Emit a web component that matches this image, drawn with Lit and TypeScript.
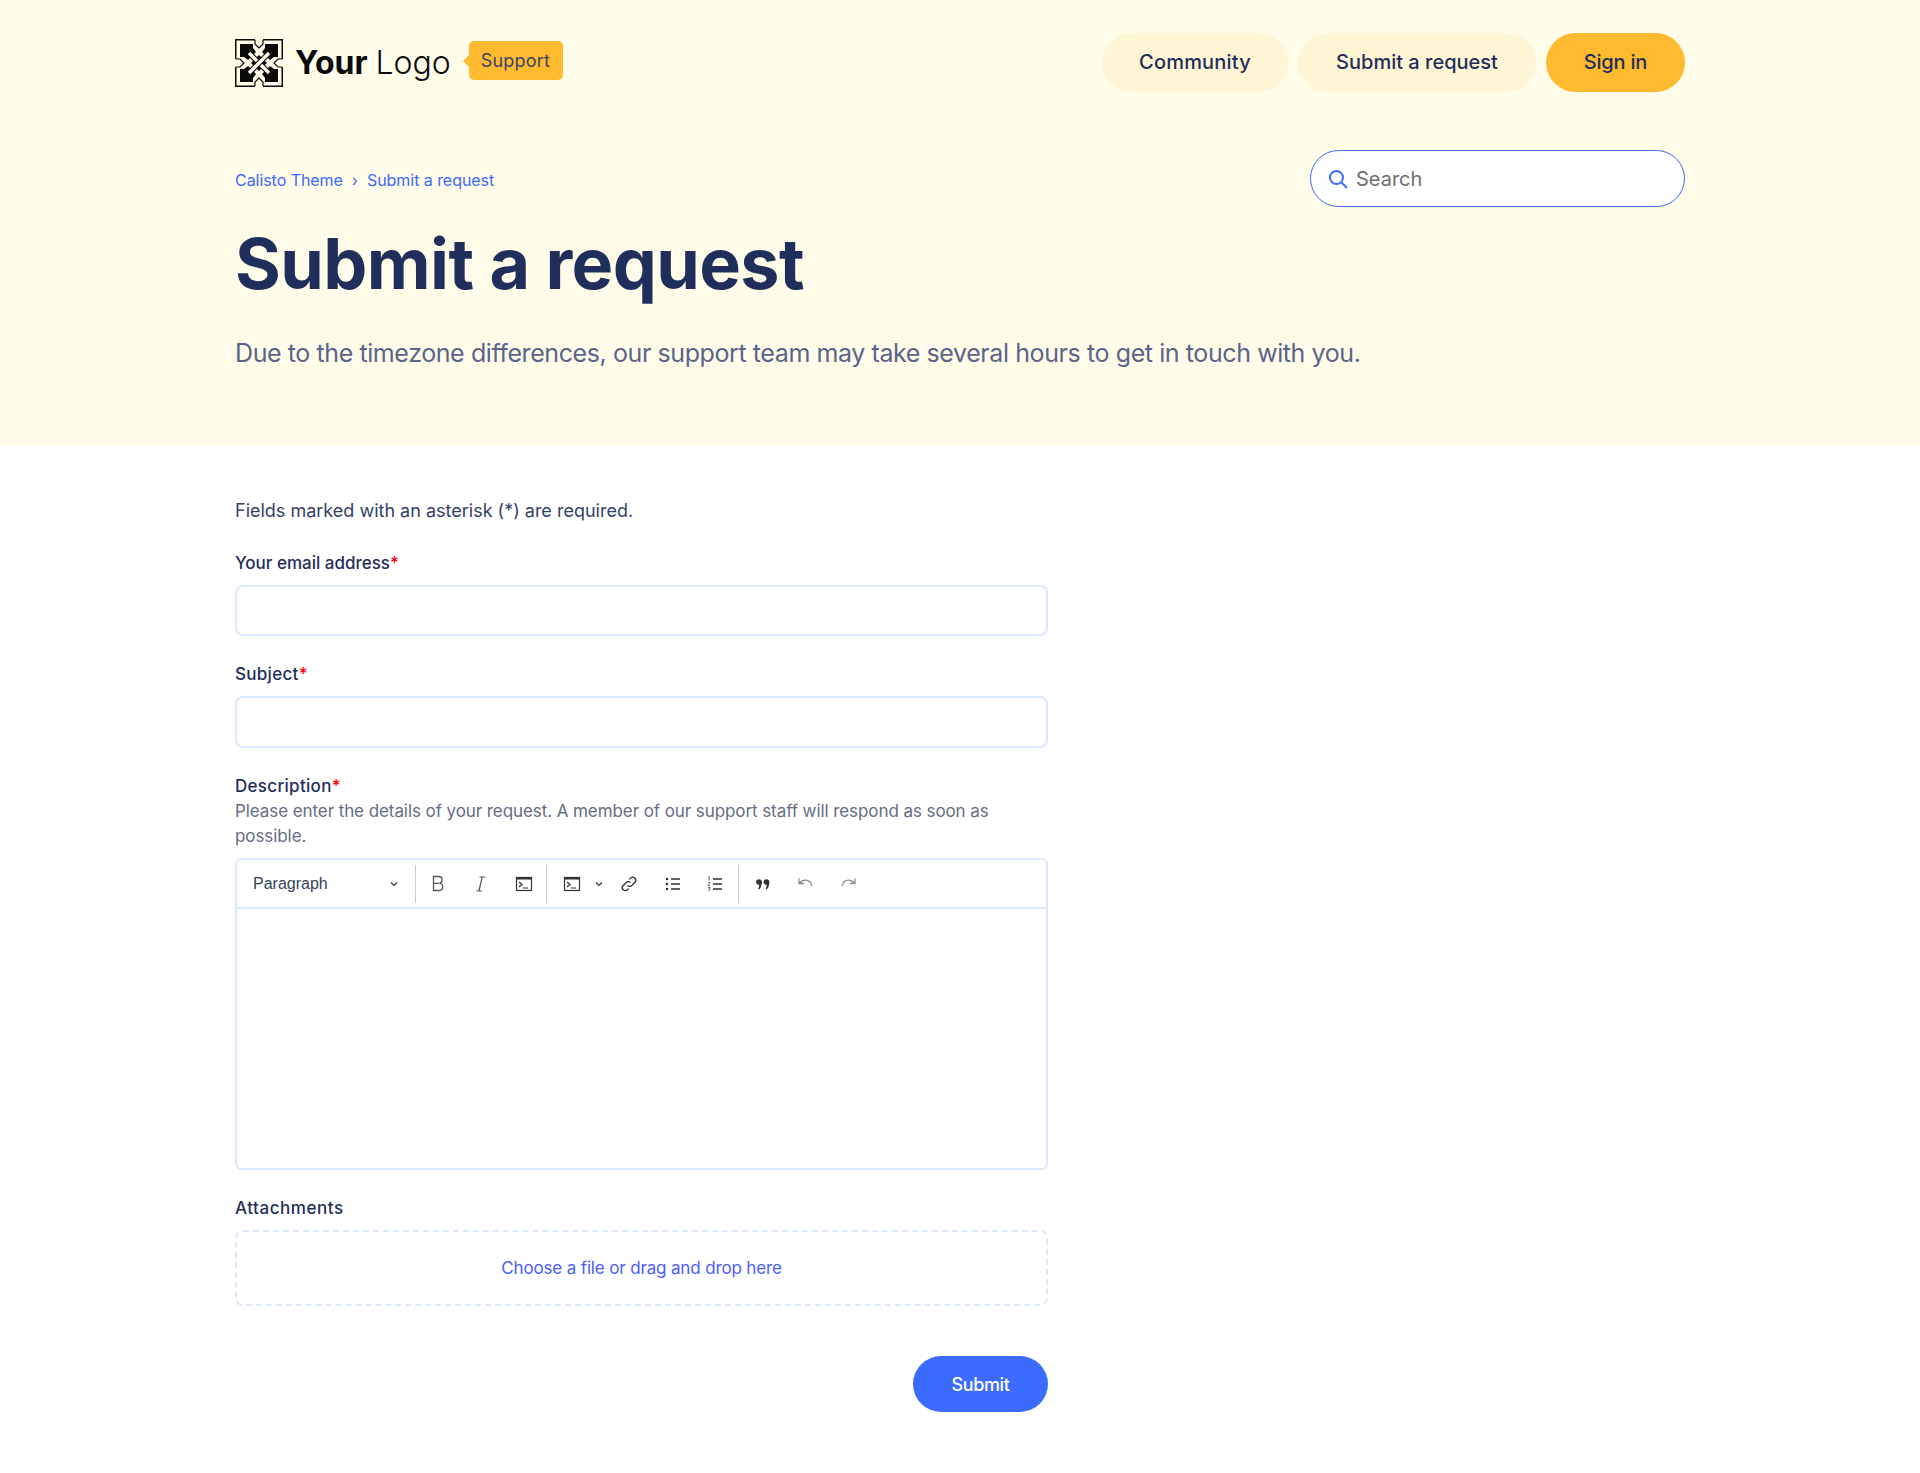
import { LitElement, html, css, svg } from "lit";
import { customElement } from "lit/decorators.js";

const ic = (w: number, body: any) => html`<svg width=${w} height=${w} viewBox="0 0 20 20" fill="none">${body}</svg>`;
const code = svg`<rect x="2.500" y="3.500" width="15" height="13" fill="none" stroke="#333" stroke-width="1.200"/><path d="M2.500 3.500h15v2h-15z" fill="#333"/><path d="M5 8l3 2.500-3 2.500M9 14h5" stroke="#333" stroke-width="1.200" fill="none"/>`;
const chevron = svg`<path d="M2 3.500l3 3 3-3" stroke="#333" stroke-width="1.200"/>`;

@customElement("app-root")
export class AppRoot extends LitElement {
  static styles = css`
    :host { display: block; font-family: Inter, "Noto Sans", sans-serif; color: #1f2e5a; background: #fff; height: 1473px; }
    a { text-decoration: none; }
    .hero { background: #fffcea; height: 446px; padding: 0 235px; box-sizing: border-box; }
    .top { display: flex; justify-content: space-between; align-items: center; padding-top: 33px; }
    .brand { display: flex; align-items: center; }
    .logo { display: block; }
    .logotext { font-size: 32px; color: #0b0b0b; margin-left: 12px; font-weight: 300; white-space: nowrap; word-spacing: -1px; }
    .logotext b { font-weight: 700; }
    .tag { position: relative; margin-left: 18px; background: #ffba2f; border-radius: 5px; height: 39px; padding: 0 13px 0 12px; display: flex; align-items: center; font-size: 18px; letter-spacing: 0.2px; color: #3a4468; margin-top: -5px; font-weight: 400; }
    .tag::before { content: ""; position: absolute; left: -6px; top: 14px; border: 6px solid transparent; border-left: 0; border-right-color: #ffba2f; }
    nav { display: flex; gap: 10px; }
    nav a { height: 59px; padding-bottom: 2px; box-sizing: border-box; border-radius: 30px; background: #fff6d6; display: flex; align-items: center; justify-content: center; font-size: 20px; font-weight: 500; color: #1f2e5a; letter-spacing: 0; }
    nav a.c { width: 186px; letter-spacing: 0.2px; } nav a.s { width: 238px; } nav a.i { width: 139px; background: #ffba2f; letter-spacing: -0.2px; }
    .crumbrow { display: flex; justify-content: space-between; align-items: center; margin-top: 58px; }
    .crumbs { font-size: 16px; color: #3d68ff; display: flex; gap: 9px; letter-spacing: -0.05px; padding-top: 2px; }
    .crumbs i { font-style: normal; }
    .search { width: 375px; height: 57px; box-sizing: border-box; border: 1px solid #3d6bff; border-radius: 29px; background: #fff; display: flex; align-items: center; padding-left: 16px; gap: 7px; font-size: 20px; color: #6f6f6f; }
    h1 { margin: 15px 0 0; font-size: 70px; line-height: 84px; font-weight: 700; color: #1f2e5a; letter-spacing: -0.6px; }
    .sub { margin: 30px 0 0; font-size: 25px; line-height: 34px; color: #5b6489; font-weight: 400; letter-spacing: -0.41px; }
    main { padding: 53px 235px 0; width: 813px; box-sizing: content-box; font-size: 18px; }
    .note { font-size: 18px; line-height: 24px; margin: 0; color: #343f66; letter-spacing: 0; }
    label { display: block; font-size: 17px; font-weight: 500; line-height: 24px; color: #1f2e5a; letter-spacing: 0; }
    label.l2 { letter-spacing: 0.3px; } label.l3 { letter-spacing: 0.3px; } label.l4 { letter-spacing: 0.55px; }
    label em { font-style: normal; color: #f00; }
    .f1 { margin-top: 28px; }
    .f { margin-top: 26px; }
    .input { height: 51px; box-sizing: border-box; border: 2px solid #dce8fd; border-radius: 8px; margin-top: 10px; }
    .input.tall { height: 52px; }
    .hint { font-size: 17px; line-height: 25px; color: #666d85; letter-spacing: -0.08px; padding-top: 1px; }
    .editor { margin-top: 9px; height: 312px; box-sizing: border-box; border: 2px solid #dce8fd; border-radius: 6px; }
    .bar { height: 47px; border-bottom: 2px solid #dce8fd; display: flex; align-items: center; box-sizing: content-box; color: #333; font-family: "Liberation Sans", Arial, sans-serif; }
    .para { font-size: 16px; width: 136px; margin-left: 16px; color: #34425a; }
    .sep { width: 1px; height: 38px; background: #ccced1; }
    .bar svg { flex: none; display: block; }
    .chev { margin-right: 16px; }
    .chev2 { margin-left: -3px; }
    .bi { width: 42px; display: flex; justify-content: center; align-items: center; }
    .w38 { width: 38px; } .w44 { width: 44px; } .w46 { width: 46px; } .w48 { width: 48px; } .w50 { width: 50px; }
    .dl { margin-top: 10px; height: 76px; box-sizing: border-box; border: 2px dashed #dce8fd; border-radius: 8px; display: flex; align-items: center; justify-content: center; font-size: 17px; color: #4b5dff; letter-spacing: -0.15px; }
    .actions { display: flex; justify-content: flex-end; margin-top: 50px; }
    .submit { width: 135px; height: 56px; border-radius: 28px; background: #3b6cff; color: #fff; display: flex; align-items: center; justify-content: center; font-size: 18px; font-weight: 500; letter-spacing: -0.4px; }
  `;

  render() {
    return html`
      <div class="hero">
        <div class="top">
          <div class="brand">
            <svg class="logo" width="48" height="48" viewBox="0 0 48 48">
              <rect x=".75" y=".75" width="46.500" height="46.500" fill="#fffcea" stroke="#0a0a0a" stroke-width="1.500"/>
              <g fill="#0a0a0a">
                <polygon points="5,5 18,5 18,9 21,13 13,21 9,18 5,18"/>
                <polygon points="43,5 30,5 30,9 27,13 35,21 39,18 43,18"/>
                <polygon points="5,43 18,43 18,39 21,35 13,27 9,30 5,30"/>
                <polygon points="43,43 30,43 30,39 27,35 35,27 39,30 43,30"/>
                <polygon points="24,16 32,24 24,32 16,24"/>
              </g>
              <g fill="none">
                <path d="M15 15L33 33" stroke="#0a0a0a" stroke-width="5.500"/>
                <path d="M14 14L34 34" stroke="#fffcea" stroke-width="3.400"/>
                <path d="M33 15L15 33" stroke="#0a0a0a" stroke-width="5.500"/>
                <path d="M34 14L14 34" stroke="#fffcea" stroke-width="3.400"/>
              </g>
              <path d="M20 0v5l4 4 4-4V0zM20 48v-5l4-4 4 4v5zM0 20h5l4 4-4 4H0zM48 20h-5l-4 4 4 4h5z" fill="#fffcea"/>
              <path d="M20 1v4l4 4 4-4V1M20 47v-4l4-4 4 4v4M1 20h4l4 4-4 4H1M47 20h-4l-4 4 4 4h4" fill="none" stroke="#0a0a0a" stroke-width="1.200"/>
            </svg>
            <span class="logotext"><b>Your</b> Logo</span>
            <span class="tag">Support</span>
          </div>
          <nav>
            <a class="c">Community</a>
            <a class="s">Submit a request</a>
            <a class="i">Sign in</a>
          </nav>
        </div>
        <div class="crumbrow">
          <div class="crumbs"><span>Calisto Theme</span><i>›</i><span>Submit a request</span></div>
          <div class="search">
            <svg width="22" height="22" viewBox="0 0 22 22" fill="none"><circle cx="9.500" cy="9.500" r="6.500" stroke="#3d6bff" stroke-width="2"/><path d="M14.500 14.500l5.500 5.500" stroke="#3d6bff" stroke-width="2"/></svg>
            <span>Search</span>
          </div>
        </div>
        <h1>Submit a request</h1>
        <p class="sub">Due to the timezone differences, our support team may take several hours to get in touch with you.</p>
      </div>
      <main>
        <p class="note">Fields marked with an asterisk (*) are required.</p>
        <div class="f1"><label>Your email address<em>*</em></label><div class="input"></div></div>
        <div class="f"><label class="l2">Subject<em>*</em></label><div class="input tall"></div></div>
        <div class="f">
          <label class="l3">Description<em>*</em></label>
          <div class="hint">Please enter the details of your request. A member of our support staff will respond as soon as possible.</div>
          <div class="editor">
            <div class="bar">
              <span class="para">Paragraph</span>
              <svg class="chev" width="10" height="10" viewBox="0 0 10 10" fill="none">${chevron}</svg>
              <span class="sep"></span>
              <span class="bi w44">${ic(20, svg`<path d="M5.500 2.500h5c2.300 0 3.600 1.300 3.600 3.400 0 1.700-1 3-2.600 3.300 2 .2 3.200 1.600 3.200 3.500 0 2.400-1.600 3.800-4 3.800H5.500zM5.500 9.300h5.500" stroke="#555" stroke-width="1.300"/>`)}</span>
              <span class="bi">${ic(20, svg`<path d="M8 17l3.200-14M8.500 3h6M5.500 17h5.500" stroke="#555" stroke-width="1.200"/>`)}</span>
              <span class="bi w44">${ic(20, code)}</span>
              <span class="sep"></span>
              <span class="bi w50">${ic(20, code)}</span>
              <svg class="chev2" width="10" height="10" viewBox="0 0 10 10" fill="none">${chevron}</svg>
              <span class="bi w50">${ic(20, svg`<path d="M8.500 11.500a3 3 0 0 0 4.300 0l3-3a3 3 0 0 0-4.300-4.300l-1.200 1.200M11.500 8.500a3 3 0 0 0-4.300 0l-3 3a3 3 0 0 0 4.300 4.300l1.200-1.200" stroke="#333" stroke-width="1.300"/>`)}</span>
              <span class="bi w38">${ic(20, svg`<path d="M8 5h9M8 10h9M8 15h9" stroke="#333" stroke-width="1.400"/><circle cx="4" cy="5" r="1.300" fill="#333"/><circle cx="4" cy="10" r="1.300" fill="#333"/><circle cx="4" cy="15" r="1.300" fill="#333"/>`)}</span>
              <span class="bi w46">${ic(20, svg`<path d="M8 5h9M8 10h9M8 15h9" stroke="#333" stroke-width="1.400"/><path d="M3 3.200l1.200-.7v4M3 8.700c1-.8 2-.4 2 .4 0 .8-2 1.500-2 2.500h2M3 13.500h2l-1 1.300c1 0 1.300.5 1 1.200-.3.500-1.500.5-2 0" stroke="#333" stroke-width=".7"/>`)}</span>
              <span class="sep"></span>
              <span class="bi w48">${ic(20, svg`<g fill="#333"><circle cx="6" cy="8" r="2.800"/><circle cx="13.500" cy="8" r="2.800"/><path d="M8.800 8c0 3.500-1 6-2.600 7.500L5.200 15c.8-1.500 1-3.200 1-5zM16.300 8c0 3.500-1 6-2.600 7.500l-1-.5c.8-1.500 1-3.200 1-5z"/></g>`)}</span>
              <span class="bi w38">${ic(20, svg`<path d="M3 4.500v5h5M3.500 9.200c2-2.500 4-3 6-3 3 0 5.500 2 6.500 6" stroke="#8b8b8b" stroke-width="1.300"/>`)}</span>
              <span class="bi w46">${ic(20, svg`<path d="M17 4.500v5h-5M16.500 9.200c-2-2.500-4-3-6-3-3 0-5.500 2-6.500 6" stroke="#8b8b8b" stroke-width="1.300"/>`)}</span>
            </div>
          </div>
        </div>
        <div class="f"><label class="l4">Attachments</label><div class="dl">Choose a file or drag and drop here</div></div>
        <div class="actions"><a class="submit">Submit</a></div>
      </main>
    `;
  }
}
